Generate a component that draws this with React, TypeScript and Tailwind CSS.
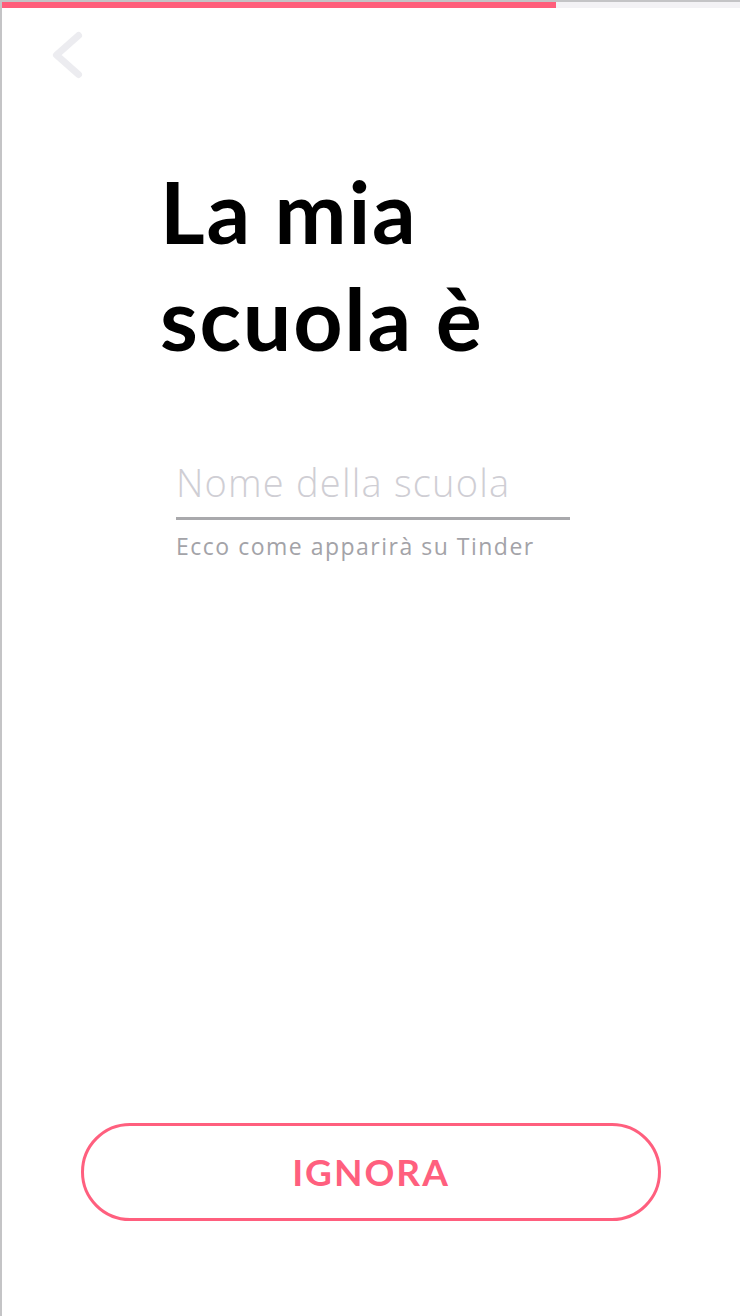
import React from 'react';

const App: React.FC = () => {
  return (
    <div className="min-h-[1316px] w-[740px] bg-white border-l-2 border-[#c4c4c6] flex flex-col font-['Lato','Noto_Sans',sans-serif]">
      <div className="border-t-2 border-[#c4c4c6]">
        <div className="h-[6px] bg-[#f3f2f5]">
          <div className="h-full w-[554px] bg-[#ff5e7b]" />
        </div>
      </div>

      <div className="pl-[46px] pt-[22px]">
        <svg width="40" height="50" viewBox="0 0 40 50" fill="none">
          <path d="M30.5 5.5 L8.5 25 L30.5 44.5" stroke="#ececf0" strokeWidth="7" strokeLinecap="round" strokeLinejoin="round" />
        </svg>
      </div>

      <h1 className="pl-[158px] pt-[77px] text-[86px] leading-[107px] font-bold text-black tracking-[1.8px]">
        La mia
        <br />
        scuola è
      </h1>

      <div className="pl-[174px] pt-[88px] w-[568px]">
        <div className="border-b-[3px] border-[#a9a9ac] pb-[12px]">
          <span className="block text-[38px] leading-[46px] font-['Open_Sans',sans-serif] font-light tracking-[1.2px] text-[#cfced4]">Nome della scuola</span>
        </div>
        <p className="pt-[12px] text-[23px] leading-[28px] font-['Open_Sans',sans-serif] tracking-[1.5px] text-[#a3a3a8]">Ecco come apparirà su Tinder</p>
      </div>

      <div className="flex-1" />

      <div className="px-[79px] pb-[95px]">
        <button className="w-full h-[98px] rounded-full border-[3px] border-[#ff5f7e] flex items-center justify-center">
          <span className="text-[37px] font-bold tracking-[2px] text-[#ff5f7e]">IGNORA</span>
        </button>
      </div>
    </div>
  );
};

export default App;
